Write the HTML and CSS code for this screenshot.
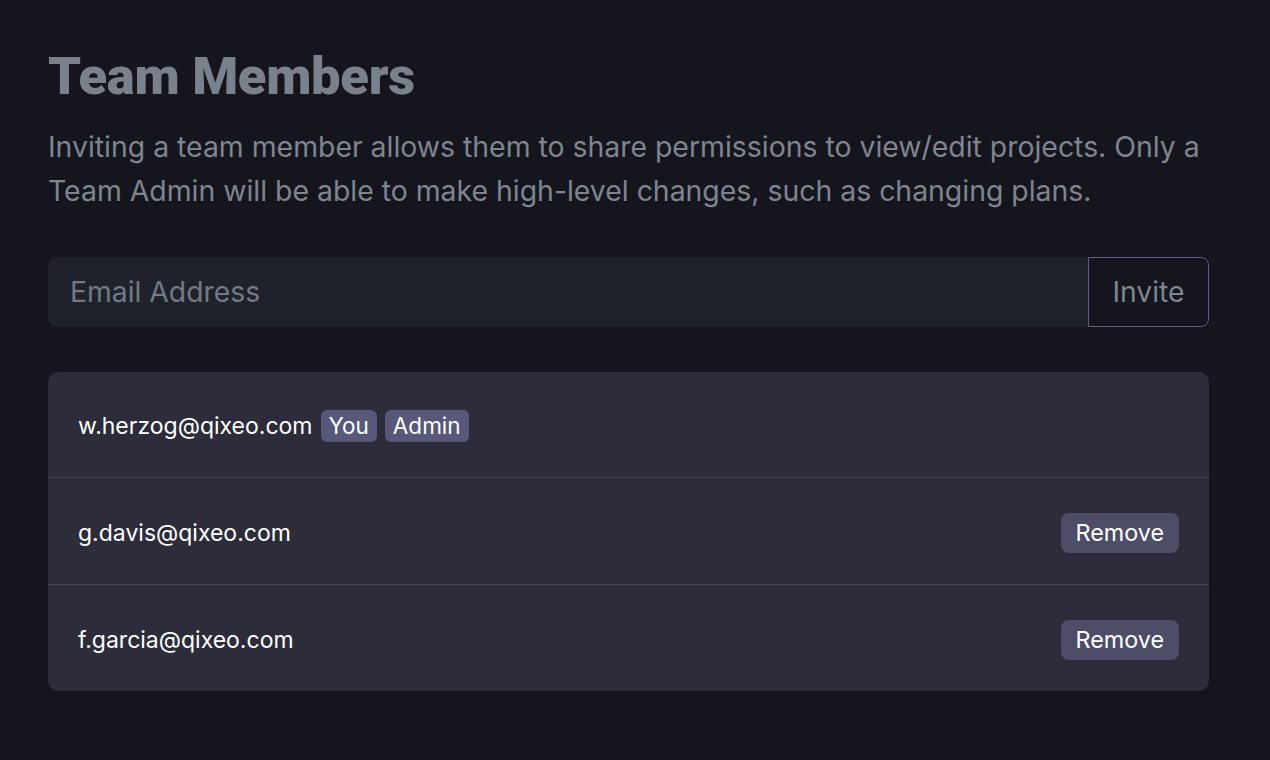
FILE: index.html
```html
<!DOCTYPE html>
<html>
<head>
<meta charset="utf-8">
<link rel="stylesheet" href="styles.css">
</head>
<body>
<main class="page">
  <h1 class="title">Team Members</h1>
  <p class="desc">Inviting a team member allows them to share permissions to view/edit projects. Only a Team Admin will be able to make high-level changes, such as changing plans.</p>
  <form class="invite">
    <input class="invite-input" type="text" placeholder="Email Address">
    <button class="invite-btn" type="button">Invite</button>
  </form>
  <ul class="members">
    <li class="member">
      <span class="email">w.herzog@qixeo.com</span>
      <span class="badge">You</span>
      <span class="badge">Admin</span>
    </li>
    <li class="member">
      <span class="email">g.davis@qixeo.com</span>
      <button class="remove" type="button">Remove</button>
    </li>
    <li class="member">
      <span class="email">f.garcia@qixeo.com</span>
      <button class="remove" type="button">Remove</button>
    </li>
  </ul>
</main>
</body>
</html>
```
FILE: styles.css
```css
* { box-sizing: border-box; }
html, body { margin: 0; padding: 0; }
body {
  background: #15151e;
  font-family: Inter, "Noto Sans", sans-serif;
  width: 1270px;
  height: 760px;
  overflow: hidden;
}
.page {
  padding: 44px 61px 0 48px;
}
.title {
  margin: 0;
  font-family: Roboto, sans-serif;
  font-weight: 900;
  font-size: 52.5px;
  line-height: 64px;
  color: #7b818b;
  letter-spacing: -0.3px;
}
.desc {
  margin: 17px 0 0;
  font-size: 28.4px;
  line-height: 44px;
  color: #7f858e;
}
.invite {
  display: flex;
  margin-top: 44px;
  height: 70px;
}
.invite-input {
  flex: 1;
  background: #1f212b;
  border: none;
  border-radius: 8px 0 0 8px;
  padding: 0 22px;
  font-family: Inter, sans-serif;
  font-size: 28.3px;
  color: #7f858e;
  outline: none;
}
.invite-input::placeholder { color: #737a84; }
.invite-btn {
  width: 121px;
  background: #15151e;
  border: 1.5px solid #5e5e82;
  border-radius: 0 8px 8px 0;
  font-family: Inter, sans-serif;
  font-size: 28.3px;
  color: #7f858e;
}
.members {
  list-style: none;
  margin: 45px 0 0;
  padding: 0;
  background: #2c2c3a;
  border-radius: 10px;
}
.member {
  display: flex;
  align-items: center;
  gap: 8px;
  height: 107px;
  padding: 3px 30px 0;
  border-top: 1.5px solid #45464f;
}
.member:first-child { border-top: none; height: 105px; }
.email {
  font-size: 23px;
  color: #ffffff;
}
.badge {
  background: #58587a;
  color: #ffffff;
  font-size: 22.5px;
  line-height: 32px;
  padding: 0 8px;
  border-radius: 6px;
}
.remove {
  margin-left: auto;
  background: #4d4d68;
  color: #ffffff;
  border: none;
  border-radius: 8px;
  height: 40px;
  padding: 0 15px;
  font-family: Inter, sans-serif;
  font-size: 23.3px;
}
```
